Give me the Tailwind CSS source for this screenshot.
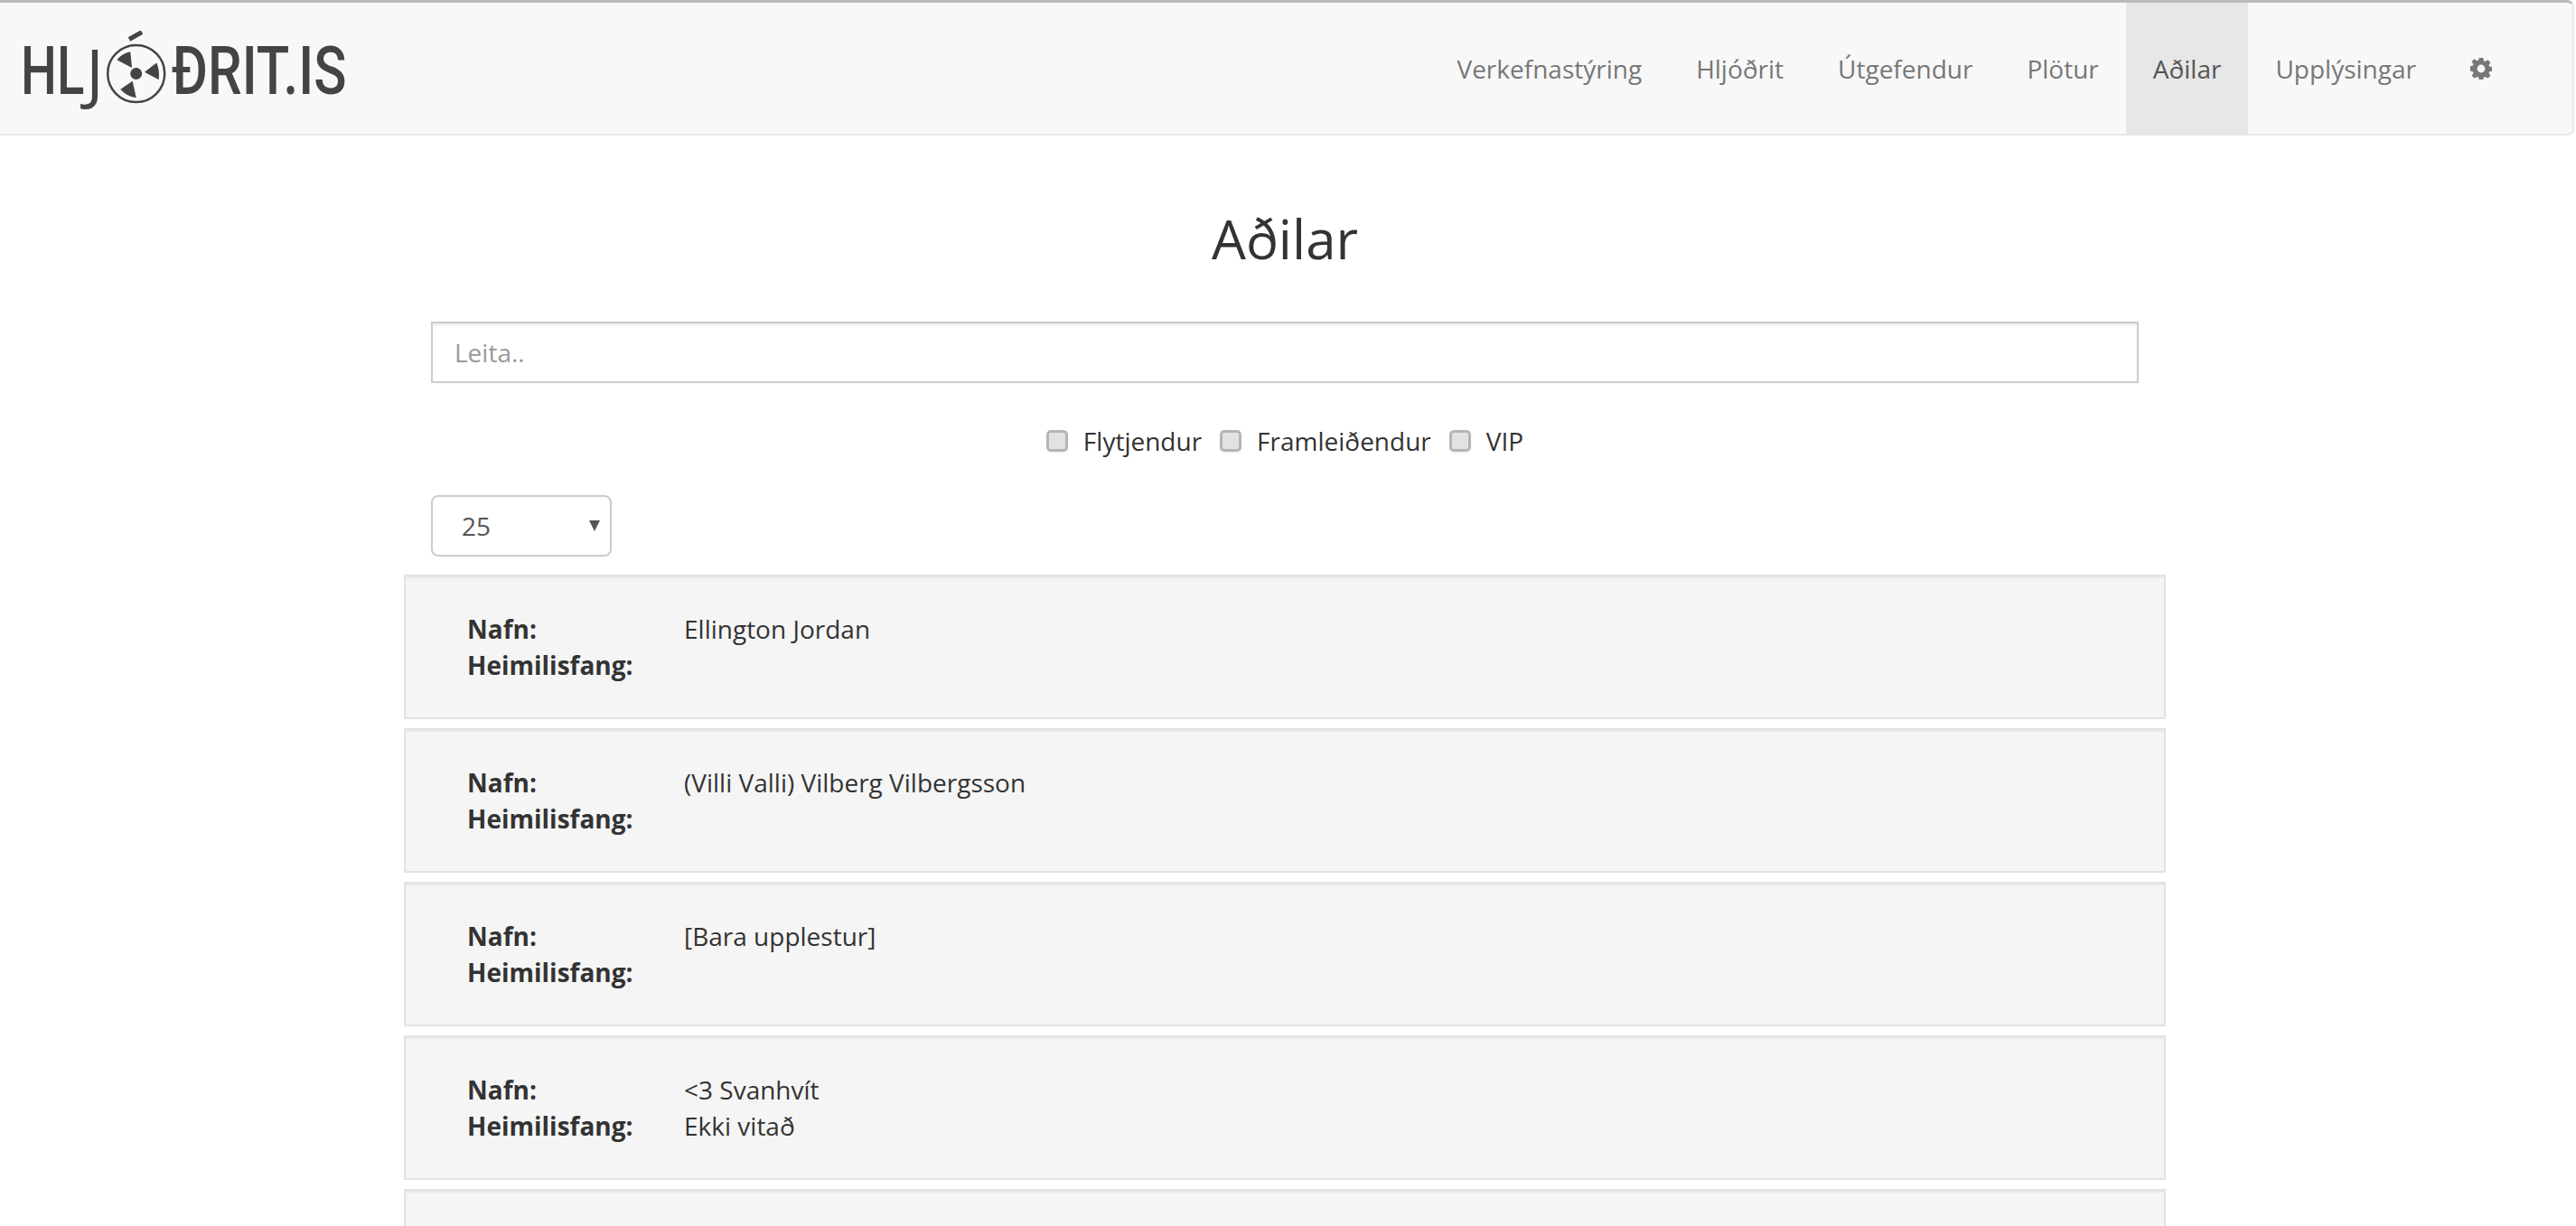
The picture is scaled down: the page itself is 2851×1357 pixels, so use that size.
<!DOCTYPE html>
<html lang="en">
<head>
    <meta charset="UTF-8">
    <meta name="viewport" content="width=device-width, initial-scale=1.0">
    <script src="https://cdn.jsdelivr.net/npm/@tailwindcss/browser@4"></script>
    <title>Aðilar</title>
</head>
<body class="h-screen overflow-hidden bg-white font-['Open_Sans',sans-serif] text-[28px] leading-[40px] text-[#333]">
    <!-- Navbar -->
    <nav class="flex h-[150px] w-[2849px] items-stretch justify-between rounded-r-lg border-t-[3px] border-r-2 border-b-2 border-t-[#bbb] border-r-[#e7e7e7] border-b-[#e7e7e7] bg-[#f8f8f8]">
        <a class="flex items-center pl-[23px] font-['Roboto',sans-serif] text-[74px] font-medium leading-none text-[#444]" href="#">
            <span class="w-[72px] origin-left translate-y-[3px] scale-x-[0.76] whitespace-nowrap">HL</span>
            <span class="w-[18px] translate-y-[3px] font-['Open_Sans',sans-serif] font-normal">J</span>
            <svg class="h-[90px] w-[77px] shrink-0 translate-y-[3px]" viewBox="0 0 77 90" fill="#444">
                <path d="M30 9.5 L44 1.5" stroke="#444" stroke-width="5" fill="none"/>
                <circle cx="37.7" cy="47.5" r="31.5" fill="none" stroke="#444" stroke-width="2.5"/>
                <circle cx="37.7" cy="47.5" r="6.5"/>
                <path d="M33 41 L16.3 32.2 Q22 25 31.3 23.2 Z"/>
                <path d="M47 45.8 L60.3 35.5 Q64 44 62.7 54.2 Z"/>
                <path d="M33.7 55.8 L37.7 74.2 Q27 73 20.3 64.8 Z"/>
            </svg>
            <span class="w-[193px] origin-left translate-y-[3px] scale-x-[0.81] whitespace-nowrap">ĐRIT.IS</span>
        </a>
        <ul class="flex items-stretch pr-[59px] text-[#777]">
            <li class="flex items-center px-[30px]">Verkefnastýring</li>
            <li class="flex items-center px-[30px]">Hljóðrit</li>
            <li class="flex items-center px-[30px]">Útgefendur</li>
            <li class="flex items-center px-[30px]">Plötur</li>
            <li class="flex items-center bg-[#e7e7e7] px-[30px] text-[#555]">Aðilar</li>
            <li class="flex items-center px-[30px]">Upplýsingar</li>
            <li class="flex items-center px-[30px]">
                <svg class="h-[24px] w-[24px]" viewBox="0 0 24 24" fill="#777">
                    <path fill-rule="evenodd" d="M9.8 0h4.4l.6 3.2 1.9.8 2.7-1.8 3 3-1.9 2.7.8 1.9 3 .6v4.2l-3 .6-.8 1.9 1.9 2.7-3 3-2.7-1.9-1.9.8-.6 3.3H9.8l-.6-3.3-1.9-.8-2.7 1.9-3-3 1.9-2.7-.8-1.9-3-.6V9.4l3-.6.8-1.9L1.4 4.2l3-3 2.9 2 1.9-.9zM12 7.6a4.4 4.4 0 1 0 0 8.8 4.4 4.4 0 0 0 0-8.8z"/>
                </svg>
            </li>
        </ul>
    </nav>

    <main class="w-[2844px]">
        <h1 class="mt-[81px] text-center text-[60px] leading-[66px]">Aðilar</h1>

        <div class="mx-auto mt-[59px] w-[1890px]">
            <input class="block h-[68px] w-full border-2 border-[#ccc] px-[24px] text-[#555] shadow-[inset_0_2px_2px_rgba(0,0,0,0.075)] placeholder:text-[#999]" type="text" placeholder="Leita..">
        </div>

        <div class="mt-[44px] flex h-[40px] items-center justify-center gap-[20px]">
            <label class="flex items-center gap-[17px]">
                <span class="h-[24px] w-[24px] rounded-[5px] border-[3px] border-[#b5b5b5] bg-[#e2e2e2] shadow-[0_2px_2px_rgba(0,0,0,0.05)]"></span>Flytjendur
            </label>
            <label class="flex items-center gap-[17px]">
                <span class="h-[24px] w-[24px] rounded-[5px] border-[3px] border-[#b5b5b5] bg-[#e2e2e2] shadow-[0_2px_2px_rgba(0,0,0,0.05)]"></span>Framleiðendur
            </label>
            <label class="flex items-center gap-[17px]">
                <span class="h-[24px] w-[24px] rounded-[5px] border-[3px] border-[#b5b5b5] bg-[#e2e2e2] shadow-[0_2px_2px_rgba(0,0,0,0.05)]"></span>VIP
            </label>
        </div>

        <div class="relative mx-auto mt-[40px] w-[1890px]">
            <div class="relative h-[68px] w-[200px]">
                <select class="h-full w-full appearance-none rounded-lg border-2 border-[#ccc] bg-white pl-[32px] text-[#555]">
                    <option>25</option>
                </select>
                <span class="absolute top-[28px] right-[13px] h-0 w-0 border-x-[6px] border-t-[12px] border-x-transparent border-t-[#555]"></span>
            </div>
        </div>

        <!-- People list -->
        <div id="people" class="mx-auto mt-[20px] flex w-[1950px] flex-col gap-[10px]">
            <div class="grid h-[160px] grid-cols-[240px_1fr] content-center border-2 border-[#e3e3e3] bg-[#f5f5f5] pl-[68px] shadow-[inset_0_2px_2px_rgba(0,0,0,0.05)]">
                <b>Nafn:</b><span>Ellington Jordan</span>
                <b>Heimilisfang:</b><span></span>
            </div>
            <div class="grid h-[160px] grid-cols-[240px_1fr] content-center border-2 border-[#e3e3e3] bg-[#f5f5f5] pl-[68px] shadow-[inset_0_2px_2px_rgba(0,0,0,0.05)]">
                <b>Nafn:</b><span>(Villi Valli) Vilberg Vilbergsson</span>
                <b>Heimilisfang:</b><span></span>
            </div>
            <div class="grid h-[160px] grid-cols-[240px_1fr] content-center border-2 border-[#e3e3e3] bg-[#f5f5f5] pl-[68px] shadow-[inset_0_2px_2px_rgba(0,0,0,0.05)]">
                <b>Nafn:</b><span>[Bara upplestur]</span>
                <b>Heimilisfang:</b><span></span>
            </div>
            <div class="grid h-[160px] grid-cols-[240px_1fr] content-center border-2 border-[#e3e3e3] bg-[#f5f5f5] pl-[68px] shadow-[inset_0_2px_2px_rgba(0,0,0,0.05)]">
                <b>Nafn:</b><span>&lt;3 Svanhvít</span>
                <b>Heimilisfang:</b><span>Ekki vitað</span>
            </div>
            <div class="h-[160px] border-2 border-[#e3e3e3] bg-[#f5f5f5] shadow-[inset_0_2px_2px_rgba(0,0,0,0.05)]"></div>
        </div>
    </main>
</body>
</html>
